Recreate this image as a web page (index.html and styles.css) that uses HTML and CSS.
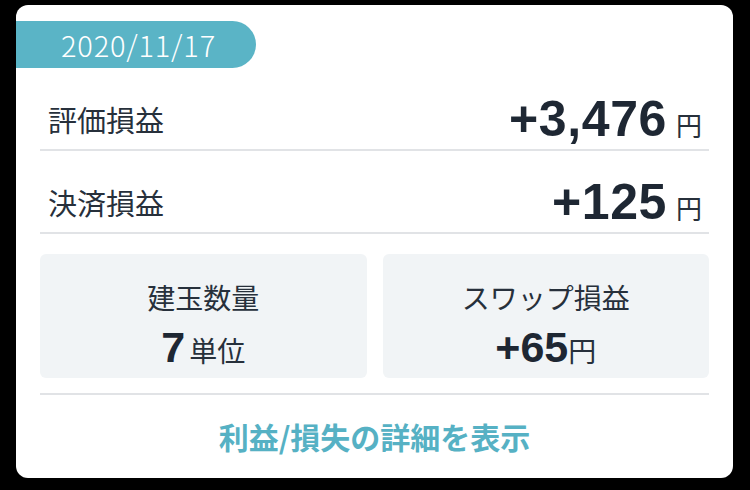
FILE: index.html
```html
<!DOCTYPE html>
<html lang="ja">
<head>
    <meta charset="UTF-8">
    <meta name="viewport" content="width=device-width, initial-scale=1.0">
    <title>損益サマリー</title>
    <link rel="stylesheet" href="styles.css">
</head>
<body>

    <div class="card">
        <div class="date-badge">2020/11/17</div>

        <div class="rows">
            <div class="row">
                <span class="row-label">評価損益</span>
                <span class="row-value"><b>+3,476</b><small>円</small></span>
            </div>
            <div class="row">
                <span class="row-label">決済損益</span>
                <span class="row-value"><b>+125</b><small>円</small></span>
            </div>

            <div class="boxes">
                <div class="box">
                    <p class="box-label">建玉数量</p>
                    <p class="box-value"><b>7</b><small class="spaced">単位</small></p>
                </div>
                <div class="box">
                    <p class="box-label">スワップ損益</p>
                    <p class="box-value"><b>+65</b><small>円</small></p>
                </div>
            </div>

            <a href="#" class="detail-link">利益/損失の詳細を表示</a>
        </div>
    </div>

</body>
</html>
```

FILE: styles.css
```css
* {
    margin: 0;
    padding: 0;
    box-sizing: border-box;
}

body {
    background: #000;
    padding: 5px 16px;
    font-family: "Noto Sans CJK JP", "Noto Sans", sans-serif;
    color: #1e2733;
}

.card {
    width: 717px;
    height: 473px;
    background: #fff;
    border-radius: 12px;
    overflow: hidden;
    padding-top: 16px;
}

.date-badge {
    width: 240px;
    height: 47px;
    background: #5ab4c6;
    border-radius: 0 24px 24px 0;
    color: #fff;
    font-size: 29px;
    font-weight: 300;
    line-height: 47px;
    padding-left: 45px;
    letter-spacing: 0.8px;
}

.rows {
    padding: 0 24px;
}

.row {
    height: 83px;
    padding: 20px 7px 0 8px;
    border-bottom: 2px solid #e1e3e6;
    display: flex;
    align-items: center;
    justify-content: space-between;
}

.row-label {
    font-size: 29px;
    color: #27303b;
}

.row-value {
    display: flex;
    align-items: baseline;
}

.row-value b {
    font-family: "Liberation Sans", Arial, sans-serif;
    font-size: 50px;
    font-weight: bold;
    letter-spacing: 0.6px;
}

.row-value small {
    font-size: 26px;
    margin-left: 9px;
    color: #27303b;
}

.boxes {
    display: grid;
    grid-template-columns: 1fr 1fr;
    gap: 16px;
    padding: 20px 0 15px;
    border-bottom: 2px solid #e1e3e6;
}

.box {
    height: 124px;
    background: #f1f4f6;
    border-radius: 6px;
    display: flex;
    flex-direction: column;
    align-items: center;
    padding-top: 25px;
    gap: 8px;
}

.box-label {
    font-size: 28px;
    line-height: 36px;
    color: #27303b;
}

.box-value {
    display: flex;
    align-items: baseline;
    line-height: 48px;
}

.box-value b {
    font-family: "Liberation Sans", Arial, sans-serif;
    font-size: 43px;
    font-weight: bold;
}

.box-value small {
    font-size: 28px;
    color: #27303b;
}

.box-value small.spaced {
    margin-left: 4px;
}

.detail-link {
    display: block;
    text-align: center;
    color: #56b1c4;
    font-size: 30px;
    font-weight: bold;
    text-decoration: none;
    line-height: 83px;
}
```
